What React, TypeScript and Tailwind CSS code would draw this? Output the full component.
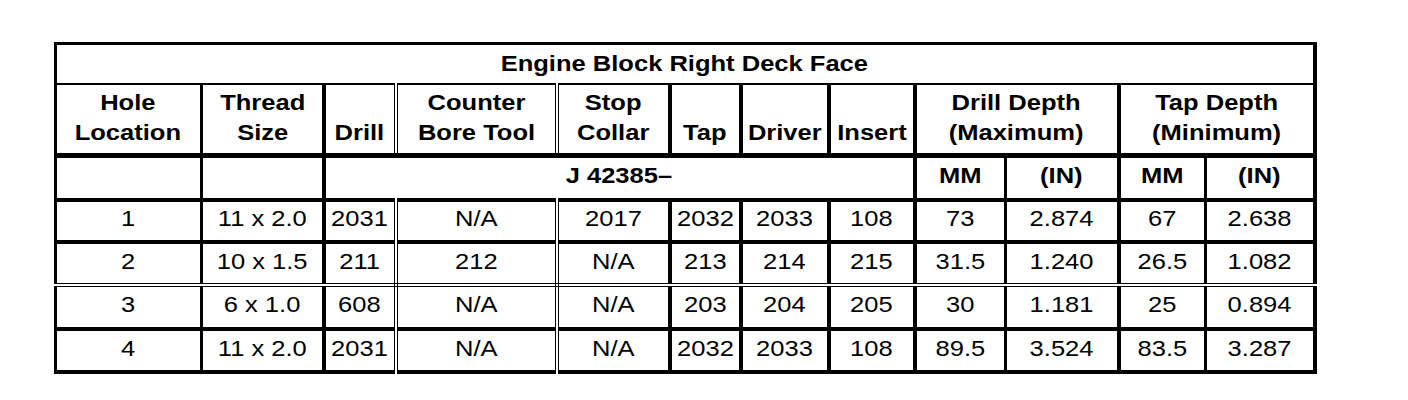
const colWidths = [
  'w-[145.5px]',
  'w-[123px]',
  'w-[71.5px]',
  'w-[161.5px]',
  'w-[112.5px]',
  'w-[71px]',
  'w-[88px]',
  'w-[86px]',
  'w-[90.5px]',
  'w-[113.5px]',
  'w-[86.5px]',
  'w-[109.5px]',
];

// right-hand rule of each column
const rightRule = [
  'border-r-[3px]',
  'border-r-4',
  '[border-right:4px_double_black]',
  '[border-right:4px_double_black]',
  'border-r-4',
  'border-r-4',
  'border-r-4',
  'border-r-4',
  'border-r-[3px]',
  'border-r-4',
  'border-r-[3px]',
  'border-r-4',
];

const rows: Array<{ cells: string[]; rule: string; height: string }> = [
  {
    cells: ['1', '11 x 2.0', '2031', 'N/A', '2017', '2032', '2033', '108', '73', '2.874', '67', '2.638'],
    rule: 'border-b-4',
    height: 'h-[42px]',
  },
  {
    cells: ['2', '10 x 1.5', '211', '212', 'N/A', '213', '214', '215', '31.5', '1.240', '26.5', '1.082'],
    rule: '[border-bottom:4px_double_black]',
    height: 'h-[43px]',
  },
  {
    cells: ['3', '6 x 1.0', '608', 'N/A', 'N/A', '203', '204', '205', '30', '1.181', '25', '0.894'],
    rule: 'border-b-4',
    height: 'h-[44px]',
  },
  {
    cells: ['4', '11 x 2.0', '2031', 'N/A', 'N/A', '2032', '2033', '108', '89.5', '3.524', '83.5', '3.287'],
    rule: 'border-b-4',
    height: 'h-[43px]',
  },
];

function Wide({ children }: { children: React.ReactNode }) {
  return <span className="inline-block scale-x-[1.16] whitespace-nowrap">{children}</span>;
}

const headCell = 'border-b-[5px] border-black align-bottom pb-[5px] leading-[30px] font-bold';

export default function App() {
  return (
    <div className="h-[400px] w-[1408px] bg-white pl-[54px] pt-[42px] font-['Liberation_Sans',Arial,sans-serif] text-[22px] text-black">
      <table className="w-[1262.5px] table-fixed border-collapse">
        <colgroup>
          {colWidths.map((w, i) => (
            <col key={i} className={w} />
          ))}
        </colgroup>
        <tbody>
          <tr className="h-[40px]">
            <td
              colSpan={12}
              className="border-t-[3px] border-b-2 border-l-[3px] border-r-4 border-black text-center align-middle font-bold leading-none"
            >
              <Wide>Engine Block Right Deck Face</Wide>
            </td>
          </tr>

          <tr className="h-[72px] text-center">
            <td className={`${headCell} border-l-[3px] ${rightRule[0]}`}>
              <Wide>
                Hole
                <br />
                Location
              </Wide>
            </td>
            <td className={`${headCell} ${rightRule[1]}`}>
              <Wide>
                Thread
                <br />
                Size
              </Wide>
            </td>
            <td className={`${headCell} ${rightRule[2]}`}>
              <Wide>Drill</Wide>
            </td>
            <td className={`${headCell} ${rightRule[3]}`}>
              <Wide>
                Counter
                <br />
                Bore Tool
              </Wide>
            </td>
            <td className={`${headCell} ${rightRule[4]}`}>
              <Wide>
                Stop
                <br />
                Collar
              </Wide>
            </td>
            <td className={`${headCell} ${rightRule[5]}`}>
              <Wide>Tap</Wide>
            </td>
            <td className={`${headCell} ${rightRule[6]}`}>
              <Wide>Driver</Wide>
            </td>
            <td className={`${headCell} ${rightRule[7]}`}>
              <Wide>Insert</Wide>
            </td>
            <td colSpan={2} className={`${headCell} ${rightRule[9]}`}>
              <Wide>
                Drill Depth
                <br />
                (Maximum)
              </Wide>
            </td>
            <td colSpan={2} className={`${headCell} ${rightRule[11]}`}>
              <Wide>
                Tap Depth
                <br />
                (Minimum)
              </Wide>
            </td>
          </tr>

          <tr className="h-[44px] text-center font-bold leading-none">
            <td className={`border-b-4 border-l-[3px] border-black ${rightRule[0]}`} />
            <td className={`border-b-4 border-black ${rightRule[1]}`} />
            <td colSpan={6} className={`border-b-4 border-black pb-[3px] ${rightRule[7]}`}>
              <Wide>J 42385–</Wide>
            </td>
            <td className={`border-b-4 border-black pb-[3px] ${rightRule[8]}`}>
              <Wide>MM</Wide>
            </td>
            <td className={`border-b-4 border-black pb-[3px] ${rightRule[9]}`}>
              <Wide>(IN)</Wide>
            </td>
            <td className={`border-b-4 border-black pb-[3px] ${rightRule[10]}`}>
              <Wide>MM</Wide>
            </td>
            <td className={`border-b-4 border-black pb-[3px] ${rightRule[11]}`}>
              <Wide>(IN)</Wide>
            </td>
          </tr>

          {rows.map((row) => (
            <tr key={row.cells[0]} className={`${row.height} text-center leading-none`}>
              {row.cells.map((value, i) => (
                <td
                  key={i}
                  className={`border-black pb-[3px] ${row.rule} ${rightRule[i]} ${i === 0 ? 'border-l-[3px]' : ''}`}
                >
                  <Wide>{value}</Wide>
                </td>
              ))}
            </tr>
          ))}
        </tbody>
      </table>
    </div>
  );
}
